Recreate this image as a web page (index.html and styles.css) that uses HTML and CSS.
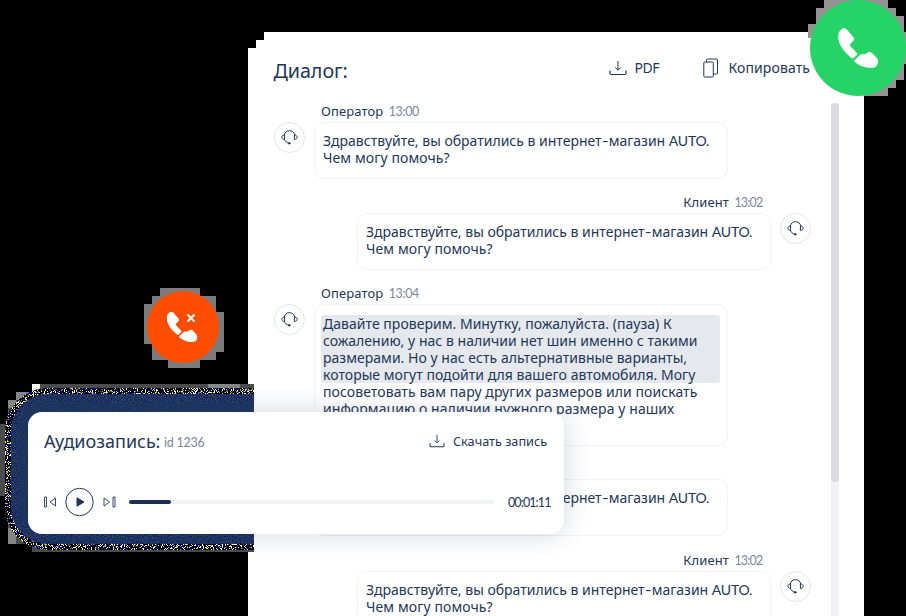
FILE: index.html
```
<!DOCTYPE html>
<html lang="ru">
<head>
<meta charset="utf-8">
<title>Диалог</title>
<link rel="stylesheet" href="styles.css">
</head>
<body>
<svg width="0" height="0" class="defs">
  <symbol id="headset" viewBox="0 0 17 15"><g fill="none" stroke="currentColor" stroke-width="1" stroke-linecap="round"><path d="M3.200 5C3.800 2 6 .7 8.500.7s4.700 1.300 5.300 4.300M3.200 5c-3.300.2-3.300 4.200 0 4.500zM13.800 5c3.300.2 3.300 4.200 0 4.500zM3.500 9.500c.7 2 2 3.200 4.300 3.800"/><circle cx="8.200" cy="13.300" r=".8" fill="currentColor"/></g></symbol>
  <symbol id="download" viewBox="0 0 18 16"><g fill="none" stroke="currentColor"><path d="M9 1v9M6.300 7.500 9 10.200l2.700-2.700"/><path d="M1 10.500v2.800q0 1.200 1.200 1.200h13.600q1.200 0 1.200-1.200v-2.800" stroke-width="1.200"/></g></symbol>
  <symbol id="phone" viewBox="0 0 122 124"><path d="M2 15Q8 1 18 1q7 0 11 6l18 21q5 7-1 12l-8 8q-3 4 0 8l19 20q3 3 1 6L48 92q-3 3-7 0Q8 66 1 37-1 24 2 15zM50 99l17-16q5-5 13-2l11-6q7-4 14 2l14 15q6 7 2 18-4 12-20 12-25 1-50-18-4-2-1-5z" fill="currentColor"/></symbol>
</svg>
<main class="panel">
  <header class="head">
    <h1>Диалог:</h1>
    <div class="action pdf"><svg width="18" height="16"><use href="#download"/></svg><span>PDF</span></div>
    <div class="action copy"><svg width="15" height="20" viewBox="0 0 15 20" fill="none" stroke="currentColor"><rect x=".8" y="4" width="9.500" height="15" rx="1"/><path d="M3.500 4V2q0-1 1-1h9q1 0 1 1v13q0 1-1 1h-3"/></svg><span>Копировать</span></div>
  </header>
  <div class="scroll">
    <section class="chat">
      <article class="msg"><div class="who">Оператор <time>13:00</time></div><div class="row"><i class="ava"><svg width="17" height="15"><use href="#headset"/></svg></i><p class="bubble">Здравствуйте, вы обратились в интернет<span class="dash">-</span>магазин <span class="geo">AUTO.</span><br><span class="wide">Чем могу помочь?</span></p></div></article>
      <article class="msg client"><div class="who">Клиент <time>13:02</time></div><div class="row"><p class="bubble">Здравствуйте, вы обратились в интернет<span class="dash">-</span>магазин <span class="geo">AUTO.</span><br><span class="wide">Чем могу помочь?</span></p><i class="ava"><svg width="17" height="15"><use href="#headset"/></svg></i></div></article>
      <article class="msg"><div class="who">Оператор <time>13:04</time></div><div class="row"><i class="ava"><svg width="17" height="15"><use href="#headset"/></svg></i><div class="bubble long"><div class="mark">Давайте проверим. Минутку, пожалуйста. (пауза) К<br>сожалению, у нас в наличии нет шин именно с такими<br>размерами. Но у нас есть альтернативные варианты,<br>которые могут подойти для вашего автомобиля. Могу</div><div class="rest">посоветовать вам пару других размеров или поискать<br>информацию о наличии нужного размера у наших</div></div></div></article>
      <article class="msg"><div class="who"></div><div class="row"><i class="ava"></i><p class="bubble">Здравствуйте, вы обратились в интернет<span class="dash">-</span>магазин <span class="geo">AUTO.</span></p></div></article>
      <article class="msg client last"><div class="who">Клиент <time>13:02</time></div><div class="row"><p class="bubble">Здравствуйте, вы обратились в интернет<span class="dash">-</span>магазин <span class="geo">AUTO.</span><br><span class="wide">Чем могу помочь?</span></p><i class="ava"><svg width="17" height="15"><use href="#headset"/></svg></i></div></article>
    </section>
    <div class="track"><div class="thumb"></div></div>
  </div>
</main>

<svg class="corner" width="16" height="16" shape-rendering="crispEdges"><path d="M0 0h16v8H8v8H0z"/></svg>

<svg class="halo" width="254" height="176" viewBox="0 380 254 176">
  <defs>
    <filter id="grain" filterUnits="userSpaceOnUse" x="0" y="380" width="300" height="176" color-interpolation-filters="sRGB">
      <feTurbulence type="fractalNoise" baseFrequency=".9" numOctaves="2" seed="4"/>
      <feColorMatrix values="14 0 0 0 -7.600  14 0 0 0 -7.600  8 0 7 0 -7.800  0 0 0 0 1"/>
      <feComposite in2="SourceGraphic" operator="in"/>
    </filter>
    <filter id="soft" filterUnits="userSpaceOnUse" x="0" y="380" width="300" height="176" color-interpolation-filters="sRGB">
      <feTurbulence type="fractalNoise" baseFrequency=".8" numOctaves="2" seed="9"/>
      <feColorMatrix values=".5 0 0 0 -.13  0 .5 0 0 -.05  0 0 .8 0 -.02  0 0 0 0 1"/>
      <feComposite in2="SourceGraphic" operator="in"/>
    </filter>
  </defs>
  <g shape-rendering="crispEdges">
    <path fill="#4b4b4b" d="M40 384h214v10H40zM16 392h24v24H16zM8 400h16v24H8zM0 424h12v72H0zM8 496h8v32H8zM16 528h24v16H16zM32 544h222v8H32z"/>
    <path fill="#858585" d="M16 392h16v8H16zM8 400h8v8H8zM8 528h8v16H8zM208 384h32v8H208z"/>
    <path fill="#fff" d="M32 384h8v8h-8z"/>
  </g>
  <rect x="8" y="391" width="300" height="156" rx="40" fill="#1d365f"/>
  <rect x="13" y="397" width="300" height="144" rx="34" fill="none" stroke="#000" stroke-width="12" filter="url(#soft)"/>
  <rect x="20" y="404" width="300" height="130" rx="26" fill="none" stroke="#000" stroke-width="20" opacity=".22" filter="url(#soft)"/>
  <rect x="8" y="391" width="300" height="156" rx="40" fill="none" stroke="#000" stroke-width="6" filter="url(#grain)"/>
</svg>

<div class="shade"></div>
<section class="player">
  <div class="ptop"><h2>Аудиозапись:</h2><span class="id geo">id 1236</span><div class="save"><svg width="16" height="14"><use href="#download"/></svg><span>Скачать запись</span></div></div>
  <div class="controls">
    <svg width="72" height="30" viewBox="0 0 72 30" fill="none" stroke="currentColor"><path d="M.5 10h2v10h-2zM11.500 11v8l-5.500-4zM60 11v8l5.500-4zM69 10h2v10h-2z" stroke-width=".9"/><circle cx="35.500" cy="15" r="13.700"/><path d="M33 10.800v8.400l7-4.200z" fill="currentColor" stroke-linejoin="round"/></svg>
    <div class="bar"><div class="done"></div></div>
    <span class="clock geo">00:01:11</span>
  </div>
</section>

<svg class="end" width="80" height="80" viewBox="144 288 80 80">
  <path shape-rendering="crispEdges" fill="#7b7b7b" d="M160 288h40v8h16v16h8v40h-8v8h-16v8h-32v-8h-16v-16h-8v-40h8v-8h8z"/>
  <circle cx="183" cy="327" r="36" fill="#ff4d00"/>
  <svg x="166.500" y="311.500" width="31" height="31" viewBox="0 0 122 124" color="#fff"><use href="#phone" width="122" height="124"/></svg>
  <path d="m187.500 314.500 7 7m0-7-7 7" stroke="#fff" stroke-width="2"/>
</svg>
<svg class="call" width="98" height="96" viewBox="808 0 98 96">
  <path shape-rendering="crispEdges" fill="#949494" d="M824 0h64v8h8v8h8v16h2v32h-2v16h-8v8h-8v8h-24V38h-56V24h8V8h8z"/>
  <circle cx="858" cy="48" r="48" fill="#26d367"/>
  <svg x="838" y="28" width="40" height="40.500" viewBox="0 0 122 124" color="#fff"><use href="#phone" width="122" height="124"/></svg>
</svg>
</body>
</html>
```

FILE: styles.css
```
* { box-sizing: border-box; }
html, body { margin: 0; height: 616px; overflow: hidden; background: #000; }
body { position: relative; color: #22365a; font-family: "Noto Sans", sans-serif; font-size: 14px; }
h1, h2, p { margin: 0; font-weight: 400; }
svg { display: block; flex: none; }
.defs { position: absolute; }
.geo, time { font-family: Lato, "Noto Sans", sans-serif; }
.panel { margin: 32px 0 0 248px; width: 616px; height: 584px; padding-left: 25.500px; background: #fff; overflow: hidden; }
.head { display: flex; align-items: center; height: 71px; }
h1 { width: 335px; font-size: 19.700px; line-height: 28px; padding-top: 6px; letter-spacing: -.05px; }
.action { display: flex; align-items: center; white-space: nowrap; }
.pdf { width: 94px; gap: 8px; }
.pdf span { font-size: 14px; letter-spacing: -.5px; }
.copy { gap: 11px; font-size: 14px; letter-spacing: .1px; }
.scroll { display: flex; height: 513px; }
.chat { width: 537px; flex: none; margin-right: 20px; }
.msg { height: 91px; }
.msg:nth-child(3) { height: 175px; }
.msg:nth-child(4) { height: 92px; }
.who { height: 18.500px; padding: 1px 0 0 47.500px; font-size: 13px; line-height: 14px; white-space: nowrap; letter-spacing: .1px; }
.client .who { padding: 1px 48px 0 0; text-align: right; }
time { margin-left: 2px; color: #7d879c; font-size: 12.500px; letter-spacing: -.4px; }
.client time { letter-spacing: -.8px; }
.row { display: flex; gap: 9px; align-items: flex-start; }
.client .row { justify-content: flex-end; }
.ava { display: flex; flex: none; align-items: center; justify-content: center; width: 31px; height: 31px; border: 1px solid #e3e5e9; border-radius: 50%; }
.bubble { width: 414px; height: 57px; padding: 9px 8px 0 8.500px; border: 1px solid #f1f3f5; border-radius: 10px; line-height: 17px; white-space: nowrap; }
.bubble .geo { letter-spacing: -.25px; }
.wide { letter-spacing: .1px; }
.dash { display: inline-block; transform: translateX(1px) scaleX(1.350); margin-right: 2.500px; }
.long { height: 142px; padding-top: 10px; }
.mark { width: 399px; margin-left: -2px; padding-left: 2px; border-radius: 3px; background: #e5e9ed; letter-spacing: .03px; }
.rest { letter-spacing: .08px; }
.track { width: 8px; height: 520px; border-radius: 4px; background: #f2f2f4; }
.thumb { height: 379px; border-radius: 4px; background: #dadae0; }
.corner { position: absolute; left: 248px; top: 32px; }
.halo { position: absolute; left: 0; top: 380px; }
.shade { position: absolute; left: 254px; top: 360px; width: 400px; height: 230px; overflow: hidden; }
.shade::before { content: ""; display: block; width: 410px; height: 122px; margin: 52px 0 0 -100px; border-radius: 14px; box-shadow: 0 0 26px rgba(28, 46, 80, .2); }
.player { position: absolute; left: 28px; top: 412px; width: 536px; height: 122px; padding: 16px 14px 0 16px; border-radius: 14px; background: #fff; }
.ptop { display: flex; align-items: center; height: 26px; white-space: nowrap; }
h2 { width: 120px; font-size: 18px; }
.id { flex: 1; font-size: 12.500px; color: #7d879c; padding-top: 3px; letter-spacing: -.25px; }
.save { display: flex; width: 121px; gap: 8px; align-items: center; font-size: 12.700px; }
.controls { display: flex; align-items: center; height: 30px; margin-top: 33px; }
.bar { width: 365px; height: 4px; margin: 0 14px 0 13px; border-radius: 2px; background: #f1f2f4; flex: none; }
.done { width: 42px; height: 4px; border-radius: 2px; background: #1c2e50; }
.clock { font-size: 12.500px; white-space: nowrap; letter-spacing: -.9px; }
.end { position: absolute; left: 144px; top: 288px; }
.call { position: absolute; left: 808px; top: 0; }
```
